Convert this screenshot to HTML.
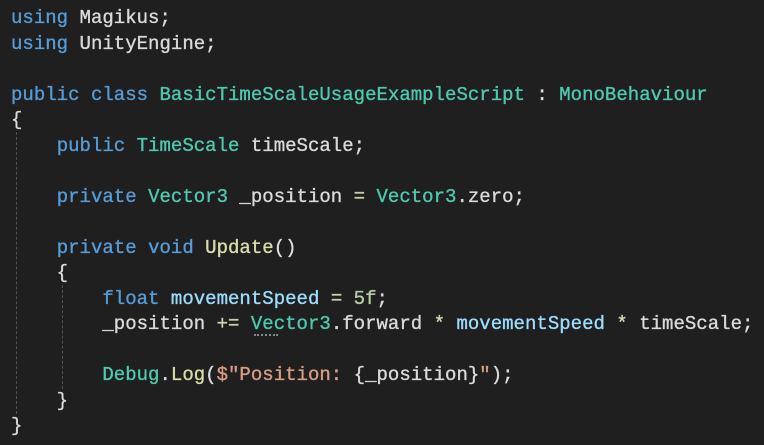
<!DOCTYPE html>
<html><head><style>
html,body{margin:0;padding:0;background:#1f1f1f;width:764px;height:445px;overflow:hidden}
pre{margin:0;padding:6px 0 0 11px;font-family:"Liberation Mono",monospace;font-size:19px;line-height:25.5px;color:#dadada;position:relative;letter-spacing:0.02px;-webkit-text-stroke:0.35px currentColor}
.k{color:#569cd6}.t{color:#4ec9b0}.m{color:#dcdcaa}.s{color:#d69d85}.v{color:#9cdcfe}.n{color:#b5cea8}.o{color:#d4d4b4}
.g{position:absolute;width:0;border-left:1px dashed #505050}
.dots{position:absolute;left:254px;top:334px;width:24px;border-top:2px dotted #888}
</style></head><body>
<div class="g" style="left:16px;top:132px;height:282px"></div>
<div class="g" style="left:62px;top:285px;height:104px"></div>
<div class="dots"></div>
<pre><span class="k">using</span> Magikus;
<span class="k">using</span> UnityEngine;

<span class="k">public</span> <span class="k">class</span> <span class="t">BasicTimeScaleUsageExampleScript</span> : <span class="t">MonoBehaviour</span>
{
    <span class="k">public</span> <span class="t">TimeScale</span> timeScale;

    <span class="k">private</span> <span class="t">Vector3</span> _position <span class="o">=</span> <span class="t">Vector3</span>.zero;

    <span class="k">private</span> <span class="k">void</span> <span class="m">Update</span>()
    {
        <span class="k">float</span> <span class="v">movementSpeed</span> <span class="o">=</span> <span class="n">5f</span>;
        _position <span class="o">+=</span> <span class="t">Vector3</span>.forward <span class="o">*</span> <span class="v">movementSpeed</span> <span class="o">*</span> timeScale;

        <span class="t">Debug</span>.<span class="m">Log</span>(<span class="s">$"Position: </span>{_position}<span class="s">"</span>);
    }
}</pre>
</body></html>
